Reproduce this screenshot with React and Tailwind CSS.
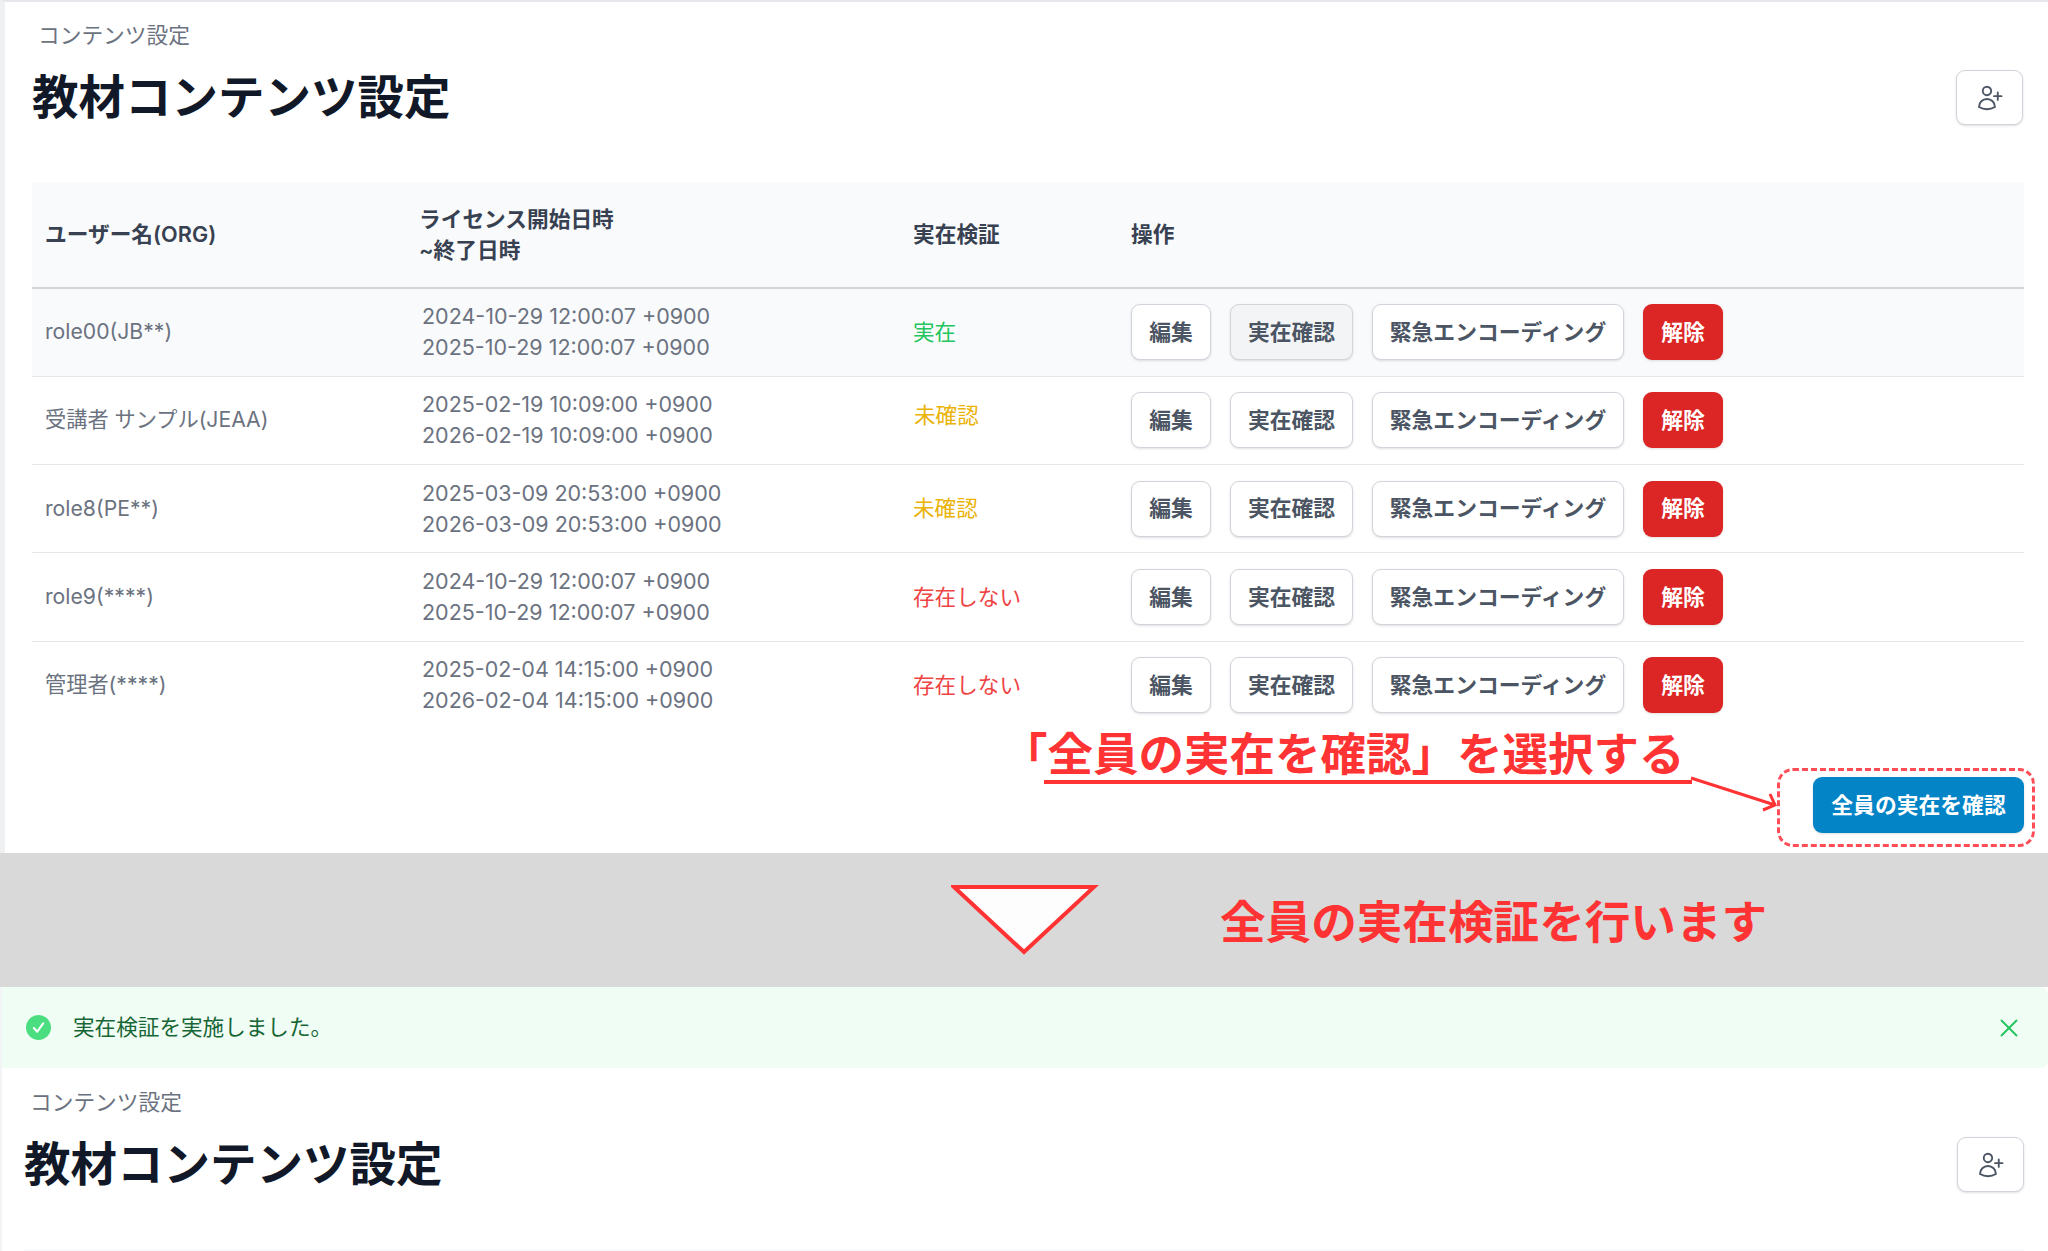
const rows = [
  { user: 'role00(JB**)', start: '2024-10-29 12:00:07 +0900', end: '2025-10-29 12:00:07 +0900', status: '実在', tone: 'text-[#22c55e]', hover: true },
  { user: '受講者 サンプル(JEAA)', start: '2025-02-19 10:09:00 +0900', end: '2026-02-19 10:09:00 +0900', status: '未確認', tone: 'text-[#eab308] relative -top-[5px] left-[1px]' },
  { user: 'role8(PE**)', start: '2025-03-09 20:53:00 +0900', end: '2026-03-09 20:53:00 +0900', status: '未確認', tone: 'text-[#eab308]' },
  { user: 'role9(****)', start: '2024-10-29 12:00:07 +0900', end: '2025-10-29 12:00:07 +0900', status: '存在しない', tone: 'text-[#ef4444]' },
  { user: '管理者(****)', start: '2025-02-04 14:15:00 +0900', end: '2026-02-04 14:15:00 +0900', status: '存在しない', tone: 'text-[#ef4444]' },
]

const fontStack = 'font-[Inter,"Noto_Sans_CJK_JP",sans-serif]'

function UserPlusIcon() {
  return (
    <svg viewBox="0 0 24 24" fill="none" stroke="#4b5563" strokeWidth="1.5" strokeLinecap="round" strokeLinejoin="round" className="-ml-[2px] w-[30px] h-[30px]">
      <path d="M19 7.5v3m0 0v3m0-3h3m-3 0h-3m-2.25-4.125a3.375 3.375 0 1 1-6.75 0 3.375 3.375 0 0 1 6.75 0ZM4 19.235v-.11a6.375 6.375 0 0 1 12.75 0v.109A12.318 12.318 0 0 1 10.374 21c-2.331 0-4.512-.645-6.374-1.766Z" />
    </svg>
  )
}

function PageHeader({ inset }) {
  return (
    <>
      <p className="ml-[6px] text-[21.7px] leading-[30px] text-[#6b7280]">コンテンツ設定</p>
      <div className="mt-[20px] h-[55px] flex items-center justify-between">
        <h1 className="text-[46.5px] leading-[55px] font-bold text-[#111827]">教材コンテンツ設定</h1>
        <button className={`w-[67px] h-[55px] flex items-center justify-center bg-white border-[1.5px] border-[#d1d5db] rounded-[9px] shadow-sm ${inset ? 'mr-[1px]' : ''}`}>
          <UserPlusIcon />
        </button>
      </div>
    </>
  )
}

function ActionButton({ label, width, active }) {
  return (
    <button className={`${width} h-[56px] flex items-center justify-center border-[1.5px] border-[#d1d5db] rounded-[9px] shadow-sm text-[21.8px] font-semibold text-[#4b5563] whitespace-nowrap ${active ? 'bg-[#f3f4f6]' : 'bg-white'}`}>
      {label}
    </button>
  )
}

export default function App() {
  return (
    <div className={`w-full h-[1251px] overflow-hidden bg-white ${fontStack}`}>
      {/* Before */}
      <section className="relative h-[853px] border-t-2 border-t-[#e5e7eb] border-l-[5px] border-l-[#eef0f2] pt-[18px] pl-[27px] pr-[24px]">
        <PageHeader inset />

        <table className="mt-[57px] w-full table-fixed text-[21.5px] text-[#6b7280]">
          <thead>
            <tr className="h-[106px] bg-[#f9fafb] border-b-2 border-[#d1d5db] text-left text-[21.7px] text-[#374151] leading-[31px]">
              <th className="w-[377px] px-[13px] font-semibold">ユーザー名(ORG)</th>
              <th className="w-[491px] px-[10px] font-semibold">ライセンス開始日時<br />~終了日時</th>
              <th className="w-[218px] px-[13px] font-semibold">実在検証</th>
              <th className="px-[13px] font-semibold">操作</th>
            </tr>
          </thead>
          <tbody>
            {rows.map((row) => (
              <tr key={row.user + row.start} className={`h-[88.25px] border-b border-[#e5e7eb] last:border-b-0 ${row.hover ? 'bg-[#f9fafb]' : ''}`}>
                <td className="px-[13px] text-[21.2px]">{row.user}</td>
                <td className="px-[13px] leading-[31px]">{row.start}<br />{row.end}</td>
                <td className="px-[13px] text-[21.6px]"><span className={row.tone}>{row.status}</span></td>
                <td className="px-[13px]">
                  <div className="flex items-center gap-[19px]">
                    <ActionButton label="編集" width="w-[80px]" />
                    <ActionButton label="実在確認" width="w-[123px]" active={row.hover} />
                    <ActionButton label="緊急エンコーディング" width="w-[252px]" />
                    <button className="w-[80px] h-[56px] bg-[#dc2626] rounded-[9px] shadow-sm text-[21.8px] font-semibold text-white">解除</button>
                  </div>
                </td>
              </tr>
            ))}
          </tbody>
        </table>

        <div className="mt-[48px] flex justify-end">
          <div className="relative">
            <button className="w-[211px] h-[56px] bg-[#0284c7] rounded-[9px] shadow-sm text-[21.8px] font-semibold text-white">全員の実在を確認</button>
            <div className="absolute -left-[36px] -right-[11px] -top-[9px] -bottom-[14px] border-[3px] border-dashed border-[#ff4d57] rounded-[16px]" />
          </div>
        </div>

        {/* Annotation */}
        <p className="absolute left-[997px] top-[723px] text-[45.5px] leading-[60px] font-bold text-[#ff3333] whitespace-nowrap">「全員の実在を確認」を選択する</p>
        <div className="absolute left-[1039px] top-[778px] w-[648px] h-[4px] bg-[#ff3333]" />
        <svg viewBox="0 0 100 50" fill="none" stroke="#ff3333" strokeWidth="3" className="absolute left-[1681px] top-[768px] w-[100px] h-[50px]">
          <path d="M5 8 89 35" />
          <path d="M84 24 89 35 77 40" />
        </svg>
      </section>

      {/* Divider */}
      <div className="h-[134px] bg-[#d9d9d9] flex items-center">
        <svg viewBox="0 0 148 72" className="ml-[951px] w-[148px] h-[72px]">
          <path d="M3 3H143L73 68Z" fill="#fdfdfd" stroke="#ff3333" strokeWidth="4" />
        </svg>
        <p className="ml-[121px] mt-[5px] text-[45.6px] leading-[60px] font-bold text-[#ff3333] whitespace-nowrap">全員の実在検証を行います</p>
      </div>

      {/* After */}
      <section className="border-l-2 border-l-[#f3f4f6]">
        <div className="h-[81px] bg-[#f0fdf4] rounded-r-lg flex items-center pl-[24px] pr-[24px]">
          <svg viewBox="0 0 24 24" className="w-[25px] h-[25px] shrink-0">
            <circle cx="12" cy="12" r="12" fill="#4ade80" />
            <path d="M7.5 12.5 10.8 16 16.5 8" fill="none" stroke="#fff" strokeWidth="2" strokeLinecap="round" strokeLinejoin="round" />
          </svg>
          <p className="ml-[22px] text-[21.6px] text-[#166534]">実在検証を実施しました。</p>
          <svg viewBox="0 0 24 24" fill="none" stroke="#22c55e" strokeWidth="1.5" strokeLinecap="round" className="ml-auto w-[30px] h-[30px]">
            <path d="M6 18 18 6M6 6l12 12" />
          </svg>
        </div>
        <div className="pt-[19px] pl-[22px] pr-[24px]">
          <PageHeader />
          <div className="mt-[57px] h-[2px] bg-[#f9fafb]" />
        </div>
      </section>
    </div>
  )
}
